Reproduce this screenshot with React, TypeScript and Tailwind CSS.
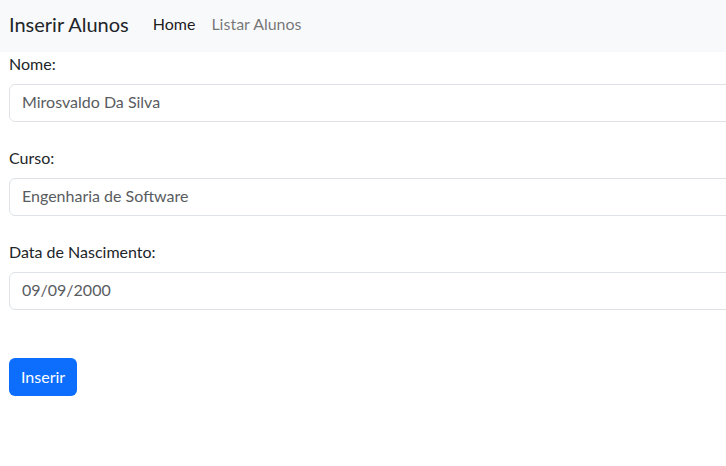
import React, { useState } from 'react';

const font = { fontFamily: 'Lato, "Noto Sans", Arial, sans-serif' };

const Field: React.FC<{ label: string; value: string; onChange: (v: string) => void }> = ({ label, value, onChange }) => (
  <div className="mb-6">
    <label className="mb-2 block text-[16px] leading-6 text-[#212529]">{label}</label>
    <input
      type="text"
      value={value}
      onChange={(e) => onChange(e.target.value)}
      className="block h-[38px] w-[780px] rounded-[6px] border border-[#dee2e6] bg-white px-3 pb-1 text-[16px] text-[#595c5f] outline-none"
    />
  </div>
);

const App: React.FC = () => {
  const [nome, setNome] = useState('Mirosvaldo Da Silva');
  const [curso, setCurso] = useState('Engenharia de Software');
  const [data, setData] = useState('09/09/2000');

  return (
    <div className="min-h-[466px] w-[726px] overflow-hidden bg-white" style={font}>
      <nav className="flex h-[52px] items-center bg-[#f8f9fa] px-[9px] pb-1">
        <span className="mr-6 text-[20px] text-[#212529]">Inserir Alunos</span>
        <a className="mr-4 text-[16px] text-[rgba(0,0,0,0.9)]">Home</a>
        <a className="text-[16px] text-[rgba(0,0,0,0.55)]">Listar Alunos</a>
      </nav>
      <form className="px-[9px]" onSubmit={(e) => e.preventDefault()}>
        <Field label="Nome:" value={nome} onChange={setNome} />
        <Field label="Curso:" value={curso} onChange={setCurso} />
        <Field label="Data de Nascimento:" value={data} onChange={setData} />
        <button
          type="submit"
          className="mt-6 h-[38px] rounded-[6px] bg-[#0d6efd] px-3 text-[16px] text-white"
        >
          Inserir
        </button>
      </form>
    </div>
  );
};

export default App;
